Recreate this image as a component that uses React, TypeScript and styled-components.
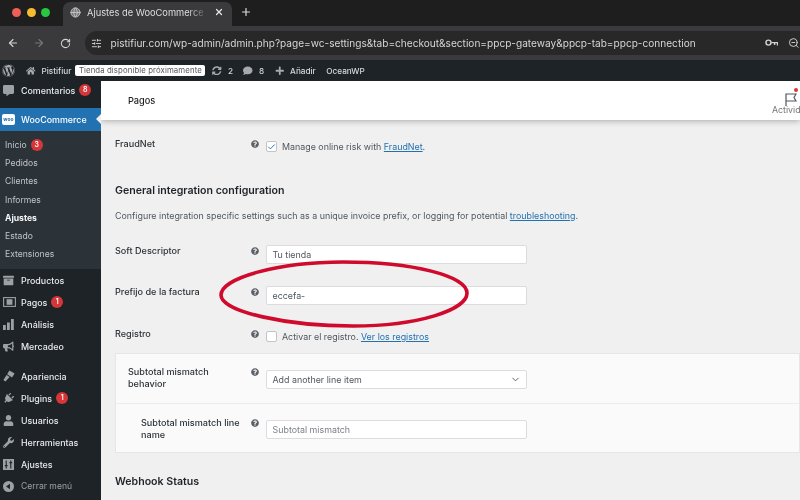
import React from 'react';
import styled, { createGlobalStyle } from 'styled-components';
import { ArrowLeft, ArrowRight, Globe, Plus, RotateCw, SlidersHorizontal, X, ZoomOut, ChevronDown, Check } from 'lucide-react';
import {
  FaArchive,
  FaBullhorn,
  FaCommentAlt,
  FaHome,
  FaPlug,
  FaPlus,
  FaQuestionCircle,
  FaSyncAlt,
  FaUser,
  FaWordpress,
  FaWrench,
  FaComment,
} from 'react-icons/fa';

const GlobalStyle = createGlobalStyle`
  html, body { margin: 0; padding: 0; width: 800px; height: 500px; overflow: hidden; background: #1d1d1f; }
  * { box-sizing: border-box; }
  body { font-family: Inter, "Liberation Sans", sans-serif; }
`;

type NavEntry = { label: string; icon: React.ReactNode; badge?: string };

const TiltedPlug = styled(FaPlug)`
  transform: rotate(45deg);
`;

// iconos del menú lateral que no están en los paquetes
const PaymentsIcon = () => (
  <svg width="13" height="10" viewBox="0 0 13 10" fill="none">
    <rect x="0.6" y="0.6" width="11.8" height="8.8" stroke="#9ca1a6" strokeWidth="1.1" />
    <rect x="3.6" y="2.2" width="5.8" height="5.6" fill="#9ca1a6" />
  </svg>
);

const BarsIcon = () => (
  <svg width="11" height="11" viewBox="0 0 11 11" fill="#9ca1a6">
    <rect x="0" y="6" width="2.8" height="5" />
    <rect x="4" y="3.5" width="2.8" height="7.5" />
    <rect x="8" y="0" width="2.8" height="11" />
  </svg>
);

const BrushIcon = () => (
  <svg width="12" height="12" viewBox="0 0 12 12" fill="#9ca1a6">
    <path d="M6.4 0.6 L11.6 3.4 L9 7.4 L4.2 4.2 Z" />
    <path d="M3.6 5 L6.6 7 L2.4 11.4 L0.4 10 Z" />
  </svg>
);

const SettingsIcon = () => (
  <svg width="11" height="11" viewBox="0 0 11 11">
    <rect width="11" height="11" fill="#9ca1a6" />
    <path d="M3.2 1.6 V9.4 M7.8 1.6 V9.4 M1.8 6.6 H4.6 M6.4 3.6 H9.2" stroke="#1d2327" strokeWidth="1.1" />
  </svg>
);

const CollapseIcon = () => (
  <svg width="11" height="11" viewBox="0 0 11 11">
    <circle cx="5.5" cy="5.5" r="5.5" fill="#9ca1a6" />
    <path d="M3 5.5 L7 2.8 V8.2 Z" fill="#1d2327" />
  </svg>
);

const topMenu: NavEntry[] = [
  { label: 'Productos', icon: <FaArchive /> },
  { label: 'Pagos', icon: <PaymentsIcon />, badge: '1' },
  { label: 'Análisis', icon: <BarsIcon /> },
  { label: 'Mercadeo', icon: <FaBullhorn /> },
];

const bottomMenu: NavEntry[] = [
  { label: 'Apariencia', icon: <BrushIcon /> },
  { label: 'Plugins', icon: <TiltedPlug />, badge: '1' },
  { label: 'Usuarios', icon: <FaUser /> },
  { label: 'Herramientas', icon: <FaWrench /> },
  { label: 'Ajustes', icon: <SettingsIcon /> },
];

const subMenu = ['Pedidos', 'Clientes', 'Informes', 'Ajustes', 'Estado', 'Extensiones'];

const HelpTip = () => (
  <HelpIcon>
    <FaQuestionCircle />
  </HelpIcon>
);

const NavRow = ({ entry }: { entry: NavEntry }) => (
  <NavItem>
    <NavIcon>{entry.icon}</NavIcon>
    {entry.label}
    {entry.badge && <Badge>{entry.badge}</Badge>}
  </NavItem>
);

// icono de contraseñas de Chrome
const PasswordKey = () => (
  <svg width="14" height="10" viewBox="0 0 14 10" fill="none" stroke="#cfcfcf" strokeWidth="1.5">
    <circle cx="3.6" cy="4.6" r="2.6" />
    <path d="M6.4 4.6 H13 V7.6 M10 4.6 V7" />
  </svg>
);

const ActivityFlag = () => (
  <svg width="12" height="13" viewBox="0 0 12 13" fill="none" stroke="#50575e" strokeWidth="1.2">
    <path d="M1 13 V1 H11 L9 4.5 L11 8 H1" />
  </svg>
);

export default function App() {
  return (
    <Screen>
      <GlobalStyle />
      <TabStrip>
        <Lights>
          <Light color="#ed5f57" />
          <Light color="#f5bd2f" />
          <Light color="#28c840" />
        </Lights>
        <Tab>
          <Globe size={11} color="#c4c4c4" fill="#777" />
          <TabTitle>Ajustes de WooCommerce ‹ Pi</TabTitle>
          <X size={10} color="#e6e6e6" strokeWidth={3} />
        </Tab>
        <NewTab>
          <Plus size={12} strokeWidth={2.4} />
        </NewTab>
      </TabStrip>

      <Toolbar>
        <ToolIcon><ArrowLeft size={12} strokeWidth={2.2} /></ToolIcon>
        <ToolIcon $dim><ArrowRight size={12} strokeWidth={2.2} /></ToolIcon>
        <ToolIcon><RotateCw size={11} strokeWidth={2.2} /></ToolIcon>
        <UrlPill>
          <SlidersHorizontal size={11} color="#d4d4d4" />
          <UrlText>pistifiur.com/wp-admin/admin.php?page=wc-settings&amp;tab=checkout&amp;section=ppcp-gateway&amp;ppcp-tab=ppcp-connection</UrlText>
          <UrlActions>
            <PasswordKey />
            <ZoomOut size={12} color="#cfcfcf" />
          </UrlActions>
        </UrlPill>
      </Toolbar>

      <AdminBar>
        <BarLogo><FaWordpress /></BarLogo>
        <BarItem $tight><FaHome />Pistifiur</BarItem>
        <StoreNotice>Tienda disponible próximamente</StoreNotice>
        <BarItem><FaSyncAlt />2</BarItem>
        <BarItem><FaComment />8</BarItem>
        <BarItem><FaPlus />Añadir</BarItem>
        <BarItem>OceanWP</BarItem>
      </AdminBar>

      <Body>
        <Sidebar>
          <NavItem $short>
            <NavIcon><FaCommentAlt /></NavIcon>
            Comentarios
            <Badge>8</Badge>
          </NavItem>
          <ActiveItem>
            <WooMark>woo</WooMark>
            WooCommerce
          </ActiveItem>
          <SubMenu>
            <SubItem>
              Inicio
              <Badge>3</Badge>
            </SubItem>
            {subMenu.map((item) => (
              <SubItem key={item} $current={item === 'Ajustes'}>
                {item}
              </SubItem>
            ))}
          </SubMenu>
          <NavGroup>
            {topMenu.map((entry) => (
              <NavRow key={entry.label} entry={entry} />
            ))}
          </NavGroup>
          <NavGroup>
            {bottomMenu.map((entry) => (
              <NavRow key={entry.label} entry={entry} />
            ))}
            <CollapseItem>
              <NavIcon><CollapseIcon /></NavIcon>
              Cerrar menú
            </CollapseItem>
          </NavGroup>
        </Sidebar>

        <Main>
          <PageHeader>
            <PageTitle>Pagos</PageTitle>
            <Activity>
              <FlagWrap>
                <ActivityFlag />
                <FlagDot />
              </FlagWrap>
              <ActivityLabel>Actividad</ActivityLabel>
            </Activity>
          </PageHeader>

          <Content>
            <FraudRow>
              <Label>FraudNet</Label>
              <HelpTip />
              <CheckLine>
                <CheckBox><Check size={10} color="#2271b1" strokeWidth={2.5} /></CheckBox>
                Manage online risk with&nbsp;<Link>FraudNet</Link>.
              </CheckLine>
            </FraudRow>

            <SectionTitle>General integration configuration</SectionTitle>
            <Description>
              Configure integration specific settings such as a unique invoice prefix, or logging for potential <Link>troubleshooting</Link>.
            </Description>

            <FieldRow>
              <Label>Soft Descriptor</Label>
              <HelpTip />
              <Input>Tu tienda</Input>
            </FieldRow>
            <FieldRow>
              <Label>Prefijo de la factura</Label>
              <HelpTip />
              <Input>eccefa-</Input>
            </FieldRow>
            <FieldRow $last>
              <Label>Registro</Label>
              <HelpTip />
              <CheckLine>
                <CheckBox />
                Activar el registro.&nbsp;<Link>Ver los registros</Link>
              </CheckLine>
            </FieldRow>

            <Panel>
              <PanelRow>
                <PanelLabel>Subtotal mismatch behavior</PanelLabel>
                <HelpTip />
                <Input>
                  Add another line item
                  <ChevronDown size={11} color="#50575e" />
                </Input>
              </PanelRow>
              <PanelRow $nested>
                <PanelLabel $nested>Subtotal mismatch line name</PanelLabel>
                <HelpTip />
                <Input $placeholder>Subtotal mismatch</Input>
              </PanelRow>
            </Panel>

            <WebhookTitle>Webhook Status</WebhookTitle>
          </Content>

          <Scribble viewBox="0 0 252 68" fill="none">
            <path
              d="M125 2 C 60 2, 3 18, 3 35 C 3 52, 70 66, 135 66 C 200 66, 249 50, 249 33 C 249 16, 195 2, 125 2 Z"
              stroke="#cf0a2c"
              strokeWidth="3.6"
            />
          </Scribble>
        </Main>
      </Body>
    </Screen>
  );
}

const Screen = styled.div`
  width: 800px;
  height: 500px;
  overflow: hidden;
  display: flex;
  flex-direction: column;
  filter: blur(0.3px);
`;

const TabStrip = styled.div`
  height: 26px;
  background: #1e1e1f;
  display: flex;
  align-items: flex-end;
  padding-left: 12px;
  flex-shrink: 0;
`;

const Lights = styled.div`
  display: flex;
  gap: 5.5px;
  align-items: center;
  height: 24px;
  width: 51px;
  padding-bottom: 4px;
`;

const Light = styled.span<{ color: string }>`
  width: 9px;
  height: 9px;
  border-radius: 50%;
  background: ${(props) => props.color};
`;

const Tab = styled.div`
  width: 169px;
  height: 24px;
  background: #3a3a3c;
  border-radius: 7px 7px 0 0;
  display: flex;
  align-items: center;
  padding: 0 8px 4px 7px;
  gap: 6px;
`;

const TabTitle = styled.span`
  flex: 1;
  font-size: 9.3px;
  color: #dedede;
  white-space: nowrap;
  overflow: hidden;
  mask-image: linear-gradient(to right, #000 84%, transparent);
`;

const NewTab = styled.div`
  color: #d9d9d9;
  height: 24px;
  padding-bottom: 4px;
  display: flex;
  align-items: center;
  margin-left: 8px;
`;

const Toolbar = styled.div`
  height: 34px;
  background: #3a3a3c;
  display: flex;
  align-items: center;
  flex-shrink: 0;
`;

const ToolIcon = styled.div<{ $dim?: boolean }>`
  width: 26px;
  display: flex;
  justify-content: center;
  color: ${(props) => (props.$dim ? '#777' : '#d4d4d4')};
`;

const UrlPill = styled.div`
  flex: 1;
  height: 24px;
  margin-left: 7px;
  background: #282829;
  border-radius: 12px 0 0 12px;
  display: flex;
  align-items: center;
  padding-left: 6px;
  gap: 8.5px;
`;

const UrlText = styled.span`
  font-size: 10.1px;
  color: #d6d6d6;
  white-space: nowrap;
  flex: 1;
`;

const UrlActions = styled.div`
  display: flex;
  align-items: center;
  gap: 10px;
  width: 35px;
  flex-shrink: 0;
`;

const AdminBar = styled.div`
  height: 21px;
  background: #1d2327;
  display: flex;
  align-items: center;
  padding-left: 2px;
  flex-shrink: 0;
  color: #d7dadd;
`;

const BarLogo = styled.div`
  font-size: 13px;
  width: 24px;
  display: flex;
  color: #a7aaad;
`;

const BarItem = styled.div<{ $tight?: boolean }>`
  display: flex;
  align-items: center;
  gap: 6px;
  font-size: 8.2px;
  font-weight: 500;
  margin-right: ${(props) => (props.$tight ? '4px' : '10.5px')};
  white-space: nowrap;

  svg {
    font-size: 9.5px;
    color: #a7aaad;
  }
`;

const StoreNotice = styled.div`
  background: #fff;
  color: #50575e;
  font-size: 7.8px;
  letter-spacing: 0.1px;
  border-radius: 2px;
  height: 11px;
  line-height: 11px;
  width: 130px;
  text-align: center;
  margin-right: 7px;
  white-space: nowrap;
`;

const Body = styled.div`
  flex: 1;
  display: flex;
  min-height: 0;
  background: #f0f0f0;
`;

const Sidebar = styled.nav`
  width: 101px;
  flex-shrink: 0;
  background: #1d2327;
  display: flex;
  flex-direction: column;
`;

const NavItem = styled.div<{ $short?: boolean }>`
  height: ${(props) => (props.$short ? '18px' : '22px')};
  flex-shrink: 0;
  display: flex;
  align-items: center;
  font-size: 8.9px;
  font-weight: 500;
  color: #e8eaeb;
  white-space: nowrap;
`;

const NavIcon = styled.span`
  width: 21px;
  padding-left: 3px;
  display: flex;
  font-size: 11px;
  color: #9ca1a6;
`;

const Badge = styled.span`
  width: 12px;
  height: 12px;
  margin-left: 4px;
  border-radius: 50%;
  background: #d63638;
  color: #fff;
  font-size: 7px;
  font-weight: 600;
  line-height: 12px;
  text-align: center;
`;

const ActiveItem = styled.div`
  position: relative;
  height: 23px;
  flex-shrink: 0;
  margin-top: 9px;
  background: #2271b1;
  color: #fff;
  display: flex;
  align-items: center;
  font-size: 8.9px;
  font-weight: 500;

  &::after {
    content: '';
    position: absolute;
    right: 0;
    top: 6px;
    border: 5px solid transparent;
    border-right-color: #f0f0f0;
    border-left-width: 0;
  }
`;

const WooMark = styled.span`
  width: 13px;
  height: 11px;
  margin: 0 6px 0 2px;
  background: #fff;
  color: #2271b1;
  border-radius: 2px;
  font-size: 5px;
  font-weight: 700;
  line-height: 10px;
  text-align: center;
`;

const SubMenu = styled.div`
  background: #2c3338;
  padding-top: 5px;
  height: 138px;
  flex-shrink: 0;
`;

const SubItem = styled.div<{ $current?: boolean }>`
  height: 18.2px;
  padding-left: 5px;
  display: flex;
  align-items: center;
  font-size: 8.6px;
  font-weight: ${(props) => (props.$current ? 700 : 400)};
  color: ${(props) => (props.$current ? '#f4f5f6' : '#c0c4c8')};
`;

const NavGroup = styled.div`
  padding-bottom: 8px;
  flex-shrink: 0;
`;

const CollapseItem = styled.div`
  height: 22px;
  display: flex;
  align-items: center;
  font-size: 8.6px;
  color: #9ca1a6;
`;

const Main = styled.main`
  position: relative;
  flex: 1;
  min-width: 0;
  overflow: hidden;
`;

const PageHeader = styled.header`
  height: 39px;
  background: #fff;
  box-shadow: 0 1px 6px rgba(0, 0, 0, 0.3);
  display: flex;
  align-items: center;
  justify-content: space-between;
  padding-left: 27px;
`;

const PageTitle = styled.h1`
  margin: 0;
  font-size: 9.2px;
  font-weight: 500;
  color: #1e1e1e;
`;

const Activity = styled.div`
  width: 28px;
  height: 100%;
  overflow: hidden;
  display: flex;
  flex-direction: column;
  padding-top: 8.5px;
`;

const FlagWrap = styled.div`
  position: relative;
  width: 16px;
  height: 13px;
  margin-left: 13px;
  flex-shrink: 0;
`;

const FlagDot = styled.span`
  position: absolute;
  top: -2px;
  left: 9px;
  width: 4px;
  height: 4px;
  border-radius: 50%;
  background: #d63638;
`;

const ActivityLabel = styled.span`
  font-size: 8.8px;
  color: #757575;
  margin-top: 1px;
`;

const Content = styled.div`
  padding: 17.5px 0 0 14px;
  color: #3c434a;
`;

const FieldGrid = styled.div`
  display: grid;
  grid-template-columns: 135px 16px 261px;
  align-items: start;
`;

const FraudRow = styled(FieldGrid)`
  height: 46px;
`;

const FieldRow = styled(FieldGrid)<{ $last?: boolean }>`
  height: ${(props) => (props.$last ? '25px' : '41.5px')};
`;

const Label = styled.label`
  font-size: 9.1px;
  font-weight: 500;
  color: #2c3338;
  line-height: 12px;
`;

const HelpIcon = styled.span`
  font-size: 8px;
  color: #5a6066;
  line-height: 12px;
  display: flex;
  padding: 2px 0 0 1px;
`;

const CheckLine = styled.div`
  display: flex;
  align-items: center;
  font-size: 8.9px;
  color: #50575e;
  height: 14px;
  white-space: nowrap;
  margin-top: 2px;
`;

const CheckBox = styled.span`
  width: 11px;
  height: 11px;
  margin-right: 5px;
  background: #fff;
  border: 1px solid #c3c4c7;
  border-radius: 2px;
  display: flex;
  align-items: center;
  justify-content: center;
`;

const Link = styled.a`
  color: #2271b1;
  text-decoration: underline;
`;

const SectionTitle = styled.h2`
  margin: 0;
  font-size: 10.6px;
  line-height: 14px;
  font-weight: 600;
  color: #1d2327;
`;

const Description = styled.p`
  margin: 12px 0 0;
  height: 35px;
  font-size: 8.9px;
  line-height: 12px;
  color: #50575e;
  white-space: nowrap;
`;

const Input = styled.div<{ $placeholder?: boolean }>`
  height: 19px;
  background: #fff;
  border: 1px solid #dcdcde;
  border-radius: 2px;
  padding: 0 5.5px;
  display: flex;
  align-items: center;
  justify-content: space-between;
  font-size: 8.9px;
  color: ${(props) => (props.$placeholder ? '#7c8086' : '#50575e')};
`;

const Panel = styled.section`
  background: #fafafa;
  border: 1px solid #e6e6e7;
  height: 100px;
`;

const PanelRow = styled(FieldGrid)<{ $nested?: boolean }>`
  height: ${(props) => (props.$nested ? '49px' : '49.5px')};
  padding-top: 12.5px;
  border-top: ${(props) => (props.$nested ? '1px solid #ececec' : 'none')};
  grid-template-columns: 134px 16px 261px;

  ${Input} {
    margin-top: ${(props) => (props.$nested ? '3px' : '3.5px')};
  }
`;

const PanelLabel = styled(Label)<{ $nested?: boolean }>`
  padding-left: ${(props) => (props.$nested ? '25px' : '12px')};
  padding-right: 4px;
`;

const WebhookTitle = styled(SectionTitle)`
  margin-top: 22.5px;
`;

const Scribble = styled.svg`
  position: absolute;
  left: 117px;
  top: 179px;
  width: 252px;
  height: 68px;
`;
